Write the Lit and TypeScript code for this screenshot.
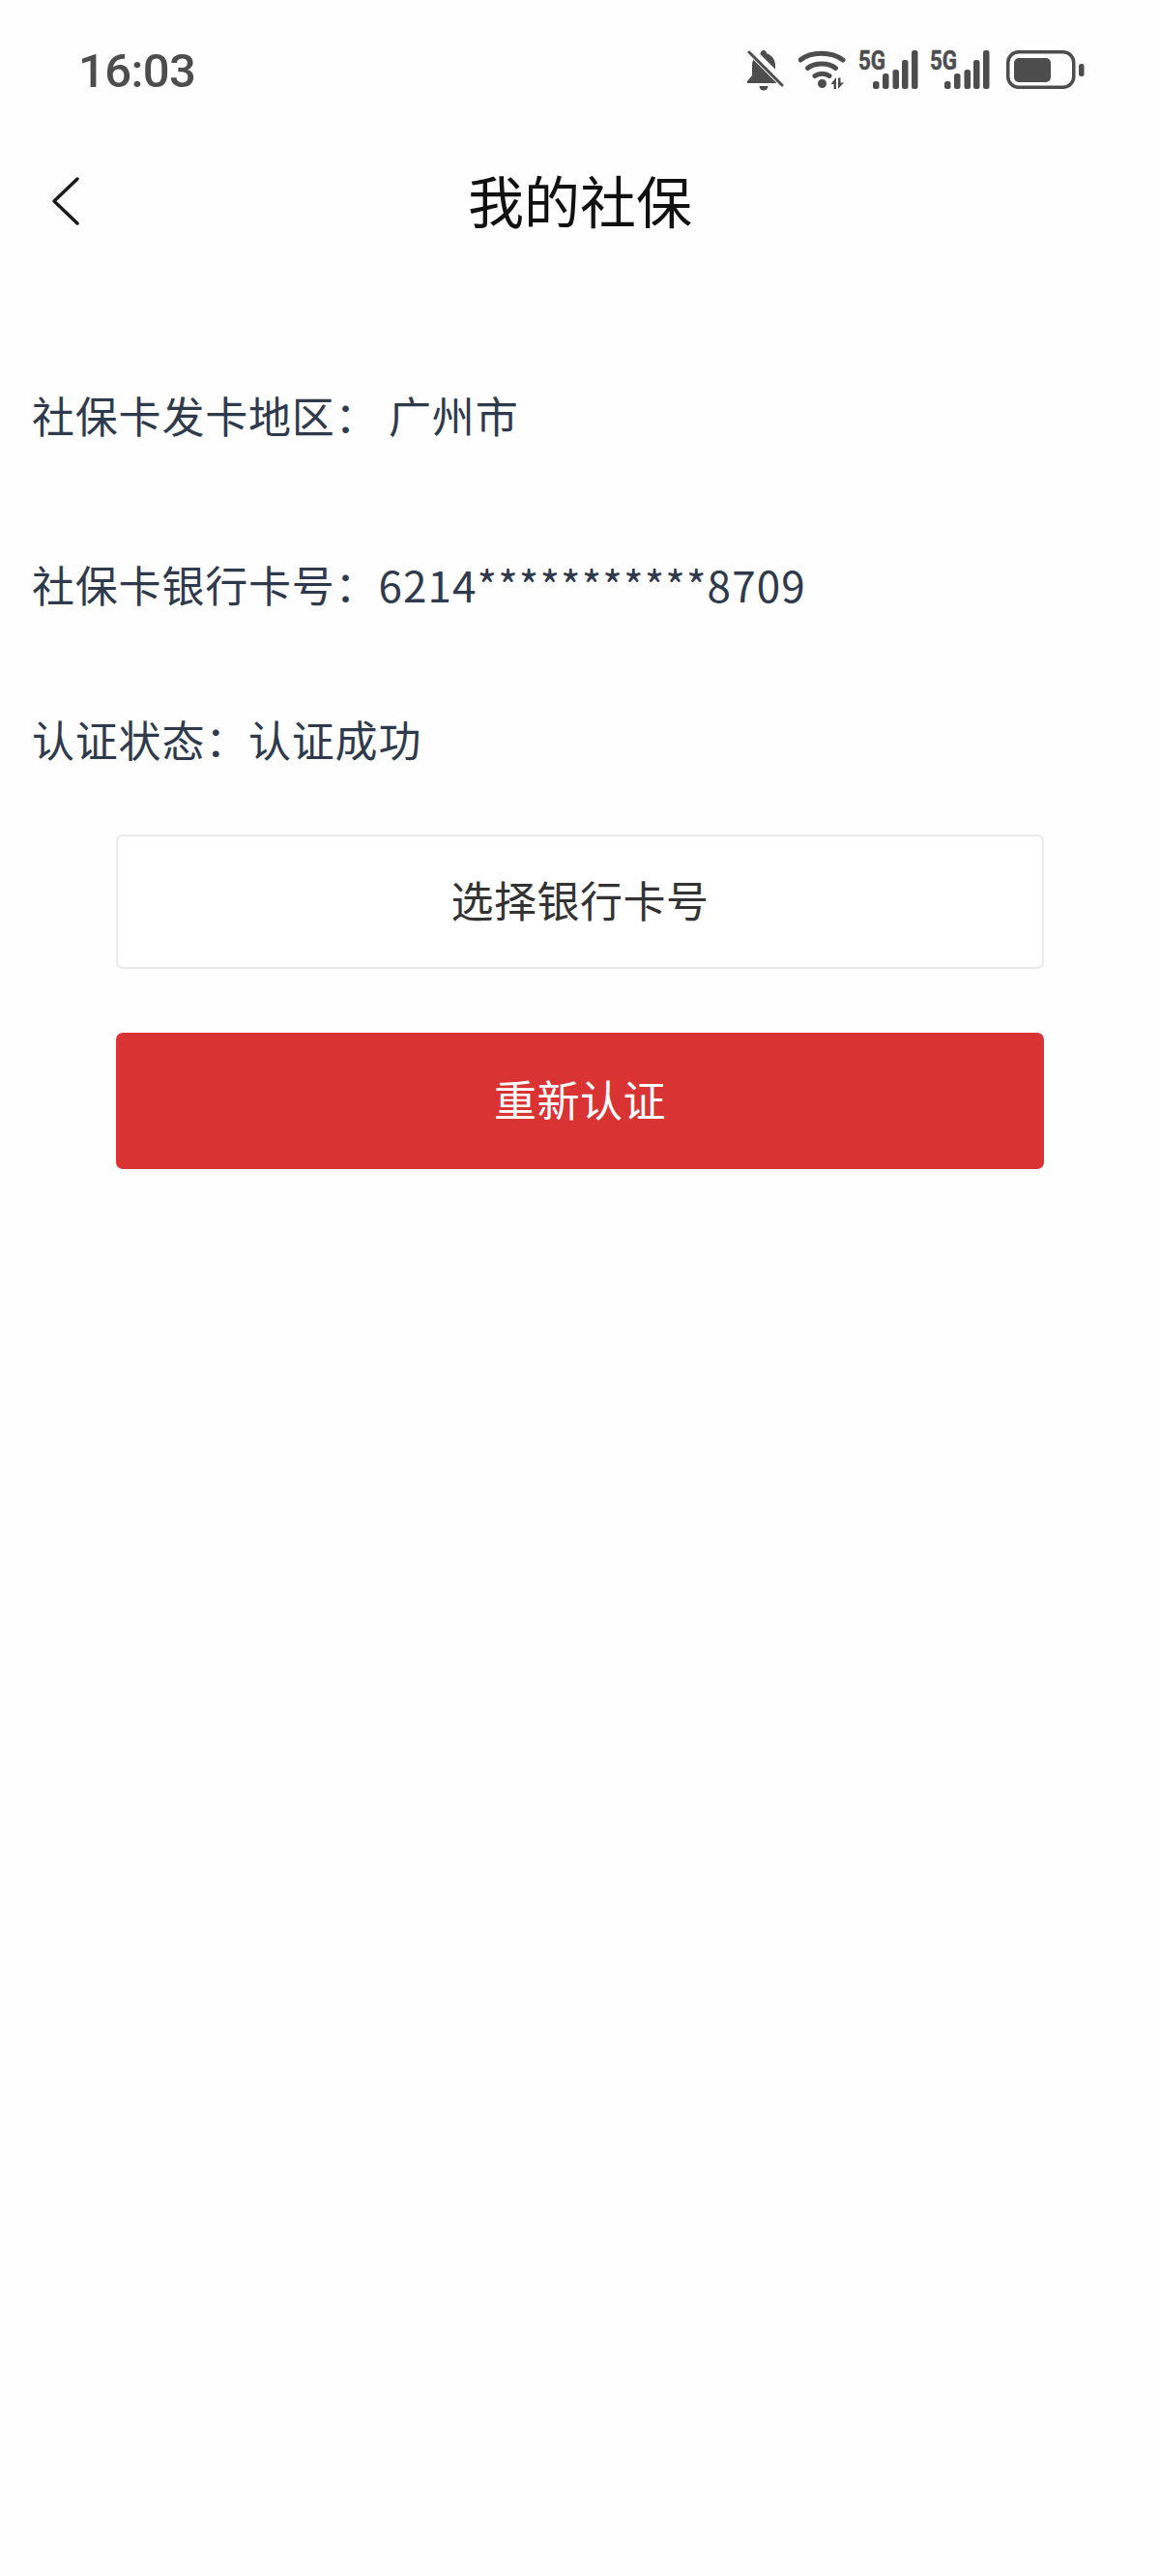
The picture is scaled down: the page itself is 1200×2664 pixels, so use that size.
import { LitElement, html, css, svg } from 'lit';
import { customElement } from 'lit/decorators.js';

const INK = '#4d4d4d';

const BARS = [
  { x: 15, y: 32, h: 8 },
  { x: 25, y: 24, h: 16 },
  { x: 35.5, y: 20, h: 20 },
  { x: 45, y: 10, h: 30 },
  { x: 55, y: 0, h: 40 },
];

const signalIcon = () => html`
  <svg class="signal" width="62" height="50" viewBox="0 -10 62 50">
    <text x="0" y="20" font-family="Roboto, sans-serif" font-weight="700" font-size="28"
      textLength="28" lengthAdjust="spacingAndGlyphs" stroke=${INK} stroke-width="0.5" fill=${INK}>5G</text>
    ${BARS.map(b => svg`<rect x=${b.x} y=${b.y} width="6.5" height=${b.h} rx="2.5" fill=${INK}></rect>`)}
  </svg>
`;

@customElement('app-root')
export class AppRoot extends LitElement {
  static styles = css`
    :host {
      display: block;
      width: 1200px;
      height: 2664px;
      background: #fefefe;
      font-family: "Noto Sans CJK SC", Roboto, sans-serif;
    }
    .status {
      display: flex;
      align-items: center;
      height: 40px;
      padding: 53px 78px 0 81px;
    }
    .time {
      font-family: Roboto, sans-serif;
      font-size: 49px;
      font-weight: 500;
      line-height: 40px;
      letter-spacing: -0.6px;
      margin-top: 2px;
      color: #4d4d4d;
    }
    .icons {
      display: flex;
      align-items: flex-start;
      margin-left: auto;
    }
    .icons svg { display: block; }
    .bell { margin-right: 14px; }
    .wifi { margin-right: 13px; }
    .signal { margin: -10px 12px 0 0; }
    .signal + .battery { margin-left: 5px; }
    .nav {
      display: grid;
      grid-template-columns: 1fr auto 1fr;
      align-items: center;
      height: 96px;
      margin-top: 67px;
      padding: 0 53px;
    }
    .back { display: block; }
    .title {
      font-size: 58px;
      line-height: 92px;
      height: 96px;
      color: #111;
    }
    .info {
      padding: 143px 0 0 33px;
      color: #2f3b4d;
      font-size: 44px;
      line-height: 60px;
      letter-spacing: 0.8px;
    }
    .row { margin: 0; }
    .row.card { margin-top: 115px; }
    .row.card span { letter-spacing: 1.1px; }
    .row.state { margin-top: 100px; }
    .actions {
      display: flex;
      flex-direction: column;
      gap: 66px;
      margin: 69px 120px 0;
    }
    .btn {
      display: flex;
      align-items: center;
      justify-content: center;
      box-sizing: border-box;
      padding-bottom: 5px;
      font-size: 44px;
      letter-spacing: 0.5px;
      border-radius: 7px;
    }
    .btn.pick {
      height: 139px;
      background: #fff;
      border: 2px solid #e9e9e9;
      color: #333;
    }
    .btn.verify {
      height: 141px;
      background: #da3333;
      color: #fff;
    }
  `;

  render() {
    return html`
      <div class="status">
        <span class="time">16:03</span>
        <div class="icons">
          <svg class="bell" width="40" height="42" viewBox="0 0 40 42">
            <path fill=${INK} d="M18 0c-2 0-3.200 1.500-3.200 3.200C9 5 6 10 6 16v10l-5 6v2h34v-2l-5-6V16c0-6-3-11-9-12.800C21 1.500 20 0 18 0z"></path>
            <path fill=${INK} d="M13.500 37h9a4.500 4.500 0 0 1-9 0z"></path>
            <path stroke="#fefefe" stroke-width="9" d="M-2 -6L40 36"></path>
            <path stroke=${INK} stroke-width="3" stroke-linecap="round" d="M3 2L37 36"></path>
          </svg>
          <svg class="wifi" width="49" height="40" viewBox="0 0 49 40">
            <g fill="none" stroke=${INK} stroke-width="5" stroke-linecap="round">
              <path d="M2 10C13 1 34 1 46 10"></path>
              <path d="M9.500 18.500C17 12.500 31 12.500 38.500 18.500"></path>
              <path d="M17 26.500C21 23.500 28 23.500 32 26.500"></path>
            </g>
            <circle cx="24.500" cy="34.500" r="4.500" fill=${INK}></circle>
            <path fill=${INK} d="M39 28L33.500 35H36.500V40H39zM41 40L47 33.500H43.500V28.500H41z"></path>
          </svg>
          ${signalIcon()}
          ${signalIcon()}
          <svg class="battery" width="81" height="40" viewBox="0 0 81 40">
            <rect x="1.750" y="1.750" width="68" height="36.500" rx="11" fill="none" stroke=${INK} stroke-width="3.500"></rect>
            <rect x="8" y="8" width="38" height="25" rx="5" fill=${INK}></rect>
            <rect x="75" y="14" width="5.500" height="13" rx="2.500" fill=${INK}></rect>
          </svg>
        </div>
      </div>
      <div class="nav">
        <svg class="back" width="30" height="52" viewBox="0 0 30 52">
          <path d="M27 3L3 26L27 49" fill="none" stroke="#1a1a1a" stroke-width="3.500" stroke-linecap="round" stroke-linejoin="round"></path>
        </svg>
        <div class="title">我的社保</div>
      </div>
      <div class="info">
        <p class="row">社保卡发卡地区： 广州市</p>
        <p class="row card">社保卡银行卡号：<span>6214***********8709</span></p>
        <p class="row state">认证状态：认证成功</p>
      </div>
      <div class="actions">
        <div class="btn pick">选择银行卡号</div>
        <div class="btn verify">重新认证</div>
      </div>
    `;
  }
}
